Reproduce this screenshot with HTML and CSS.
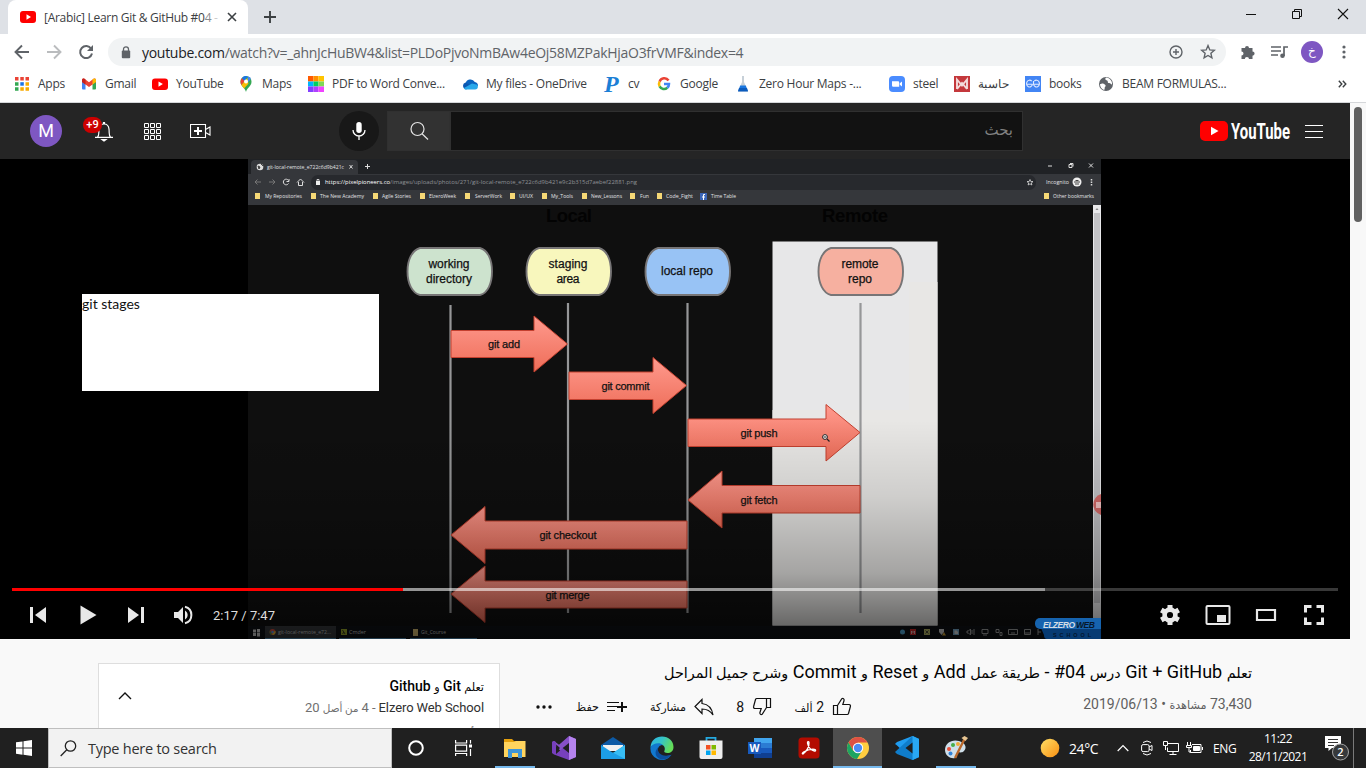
FILE: index.html
```html
<!DOCTYPE html>
<html lang="en">
<head>
<meta charset="utf-8">
<title>[Arabic] Learn Git &amp; GitHub #04</title>
<link rel="stylesheet" href="styles.css">
</head>
<body>
<div class="screen">
  <div class="tabstrip">
    <div class="tab">
      <svg class="tab-logo" width="16" height="16"><rect y="2" width="16" height="12" rx="3" fill="#f00"/><path d="M6.5 5.2v5.6L11 8z" fill="#fff"/></svg>
      <span class="tab-title">[Arabic] Learn Git &amp; GitHub #0<em>4</em> <i>-</i></span>
      <svg width="10" height="10" class="tab-x"><path d="M1 1l8 8M9 1L1 9" stroke="#3c4043" stroke-width="1.6"/></svg>
    </div>
    <svg class="newtab" width="12" height="12"><path d="M6 0v12M0 6h12" stroke="#3c4043" stroke-width="1.9"/></svg>
    <div class="winbtns">
      <svg width="12" height="12"><path d="M1 6.5h10" stroke="#111"/></svg>
      <svg width="12" height="12"><path d="M1.5 3.5h7v7h-7zM3.5 3.500v-2h7v7h-2" fill="none" stroke="#111"/></svg>
      <svg width="12" height="12"><path d="M1 1l10 10M11 1L1 11" stroke="#111" stroke-width="1.1"/></svg>
    </div>
  </div>

  <div class="toolbar">
    <div class="nav">
      <svg width="16" height="16"><path d="M15 8H2M8 1.500L1.500 8 8 14.500" fill="none" stroke="#5f6368" stroke-width="1.9"/></svg>
      <svg width="16" height="16"><path d="M1 8h13M8 1.500L14.500 8 8 14.500" fill="none" stroke="#babcbe" stroke-width="1.9"/></svg>
      <svg width="16" height="16"><path d="M13.200 4.800A6 6 0 1 0 14 9.500" fill="none" stroke="#5f6368" stroke-width="2"/><path d="M15 1v6H9z" fill="#5f6368"/></svg>
    </div>
    <div class="omnibox">
      <svg width="10" height="13"><rect x="0.800" y="4.600" width="8.400" height="7.600" rx="1" fill="#5f6368"/><path d="M2.500 5V3.300a2.500 2.500 0 0 1 5 0V5" fill="none" stroke="#5f6368" stroke-width="1.300"/></svg>
      <span class="url"><b>youtube.com</b>/watch?v=_ahnJcHuBW4&amp;list=PLDoPjvoNmBAw4eOj58MZPakHjaO3frVMF&amp;index=4</span>
      <svg class="zoomi" width="14" height="14"><circle cx="7" cy="7" r="6" fill="none" stroke="#5f6368" stroke-width="1.400"/><path d="M7 4v6M4 7h6" stroke="#5f6368" stroke-width="1.400"/></svg>
      <svg width="16" height="16"><path d="M8 1.600l1.800 4.300 4.600.4-3.500 3 1 4.600L8 11.500l-3.900 2.400 1-4.600-3.500-3 4.600-.4z" fill="none" stroke="#5f6368" stroke-width="1.400"/></svg>
    </div>
    <svg class="ext" width="16" height="16"><path d="M1.500 4H5a2 2 0 1 1 4 0h3.500v3.500a2 2 0 1 1 0 4.200V15H9a2.100 2.100 0 0 0-4.200 0H1.500v-3.500a2 2 0 0 0 0-4z" fill="#5f6368"/></svg>
    <svg class="media" width="17" height="14"><path d="M0 2h10M0 6h10M0 10h7" stroke="#5f6368" stroke-width="1.700"/><path d="M13 11V2h4" stroke="#5f6368" stroke-width="1.700" fill="none"/><circle cx="11.500" cy="10.800" r="2.300" fill="#5f6368"/></svg>
    <div class="profile">خ</div>
    <svg class="kebab" width="4" height="14"><circle cx="2" cy="2" r="1.600" fill="#5f6368"/><circle cx="2" cy="7" r="1.600" fill="#5f6368"/><circle cx="2" cy="12" r="1.600" fill="#5f6368"/></svg>
  </div>

  <div class="bookmarks">
    <div class="bm b1"><svg width="16" height="16"><path d="M1 1h3.500v3.500H1zM6.300 1h3.500v3.500H6.300zM11.500 1H15v3.500h-3.500z" fill="#ea4335"/><path d="M1 6.200h3.500v3.500H1zM1 11.300h3.500v3.500H1z" fill="#34a853"/><path d="M6.300 6.200h3.500v3.500H6.300z" fill="#1a73e8"/><path d="M11.500 6.200H15v3.500h-3.500zM6.300 11.300h3.500v3.500H6.300zM11.500 11.300H15v3.500h-3.500z" fill="#f9ab00"/></svg><span>Apps</span></div>
    <div class="bm b2"><svg width="16" height="16"><path d="M1 3.500l3.500 2.800V13.500H2a1 1 0 0 1-1-1z" fill="#4285f4"/><path d="M15 3.500l-3.500 2.800v7.200H14a1 1 0 0 0 1-1z" fill="#34a853"/><path d="M1 6V4c0-1.500 1.500-2 2.500-1.200L8 6.300l4.500-3.500C13.500 2 15 2.500 15 4v2L8 11z" fill="#ea4335"/><path d="M11.500 3.600l1-.8C13.500 2 15 2.500 15 4v2l-3.500 2.600z" fill="#fbbc04"/><path d="M1 4c0-1.500 1.500-2 2.500-1.200l1 .8v5L1 6z" fill="#c5221f"/></svg><span>Gmail</span></div>
    <div class="bm b3"><svg width="16" height="16"><rect y="2.500" width="16" height="11.500" rx="3" fill="#f00"/><path d="M6.500 5.500v5.200l4.400-2.600z" fill="#fff"/></svg><span>YouTube</span></div>
    <div class="bm b4"><svg width="16" height="16"><path d="M8 16c-.5-4-5.500-5.500-5.500-10.300A5.500 5.500 0 0 1 8 0a5.500 5.500 0 0 1 5.500 5.700C13.500 10.500 8.500 12 8 16z" fill="#34a853"/><path d="M2.500 5.700A5.500 5.500 0 0 1 4 1.900l3 3-3.600 4c-.6-1-.9-2-.9-3.200z" fill="#ea4335"/><path d="M4 1.900A5.500 5.500 0 0 1 9.800.3L6.200 5z" fill="#1a73e8"/><path d="M9.800.3a5.500 5.500 0 0 1 3.100 2.800L8.500 8z" fill="#4285f4"/><path d="M3.400 8.900l6-6.900 1 5.800L6 12.500z" fill="#fbbc04"/><circle cx="8" cy="5.600" r="2" fill="#fff"/></svg><span>Maps</span></div>
    <div class="bm b5"><svg width="16" height="16"><path d="M0 0h5.500v5.500H0z" fill="#ff5a00"/><path d="M5.500 0h5v5.500h-5z" fill="#ff9000"/><path d="M10.500 0H16v5.500h-5.500z" fill="#ffc400"/><path d="M0 5.500h5.500v5H0z" fill="#00b4ff"/><path d="M5.500 5.500h5v5h-5z" fill="#00d060"/><path d="M10.500 5.500H16v5h-5.500z" fill="#7ed957"/><path d="M0 10.500h5.500V16H0z" fill="#8440ff"/><path d="M5.500 10.500h5V16h-5z" fill="#b040ff"/><path d="M10.500 10.500H16V16h-5.500z" fill="#f042ff"/></svg><span>PDF to Word Conve...</span></div>
    <div class="bm b6"><svg width="16" height="16"><path d="M3.500 8a5 5 0 0 1 9.300-2A4 4 0 0 1 16 10l-8 2z" fill="#0a63bf"/><path d="M3.800 13.500A3.700 3.700 0 0 1 3.500 6.400L11 11z" fill="#0b57b0"/><path d="M2 12l8-4.500 5.300 1.300c1.300 2 .3 4.700-2.300 4.700H4c-1 0-1.700-.5-2-1.500z" fill="#28a8ea"/></svg><span>My files - OneDrive</span></div>
    <div class="bm b7"><span class="pglyph">P</span><span>cv</span></div>
    <div class="bm b8"><svg width="16" height="16" fill="none" stroke-width="2.500"><path d="M12.500 4.500A5 5 0 0 0 3.600 5.600" stroke="#ea4335"/><path d="M3.600 5.600a5 5 0 0 0 0 4.800" stroke="#fbbc04"/><path d="M3.600 10.400a5 5 0 0 0 7.700 1.400" stroke="#34a853"/><path d="M11.300 11.800A5 5 0 0 0 13 8H8" stroke="#4285f4"/></svg><span>Google</span></div>
    <div class="bm b9"><svg width="16" height="16"><path d="M7 0h2v6l4 9.500H3L7 6z" fill="#c7d0d8"/><path d="M5.200 9.500h5.600l2 5.500H3.200z" fill="#1976e0"/><path d="M4 12h8l1 3.500H3z" fill="#0b5bbd"/></svg><span>Zero Hour Maps -...</span></div>
    <div class="bm b10"><svg width="16" height="16"><rect width="16" height="16" rx="4" fill="#4a8cff"/><path d="M3 5.300h6a1.200 1.200 0 0 1 1.200 1.200v4.200H4.200A1.200 1.200 0 0 1 3 9.500zM10.800 7.200L13 5.500v5l-2.200-1.700z" fill="#fff"/></svg><span>steel</span></div>
    <div class="bm b11"><svg width="16" height="16"><rect width="16" height="16" fill="#c4383c"/><path d="M3 13V3.500l5 6 5-6V13M3 13l5-6 5 6" fill="none" stroke="#f3dcdc" stroke-width="1.900"/></svg><span lang="ar">حاسبة</span></div>
    <div class="bm b12"><svg width="16" height="16"><rect width="16" height="16" fill="#4285f4"/><path d="M7.500 8.200H2.200M6.700 5.200a3 3.400 0 1 0 .8 3M8.500 8.200h5.300M9.300 5.200a3 3.400 0 1 1-.8 3V5" fill="none" stroke="#dfe9ff" stroke-width="1.100"/></svg><span>books</span></div>
    <div class="bm b13"><svg width="16" height="16"><circle cx="8" cy="8" r="7" fill="#5f6368"/><path d="M2 8c2 0 2-1 4 0s2 2 1 3 .5 2-1 3C3.500 13 2 11 2 8zM8 1.500C6.500 3 7.500 4 9 4.500S9 7 11 7s1.500 1.500 3 1.500C14.500 5 12 2 8 1.500z" fill="#fff"/></svg><span>BEAM FORMULAS...</span></div>
    <svg class="more" width="9" height="8"><path d="M.8.800L3.800 4 .8 7.200M4.800.800L7.800 4 4.800 7.200" fill="none" stroke="#3c4043" stroke-width="1.400"/></svg>
  </div>

  <div class="page">
    <div class="content">
      <div class="yt-head">
        <div class="avatar">M</div>
        <div class="bell">
          <svg width="20" height="22" fill="none" stroke="#fff" stroke-width="1.200"><path d="M1 17.400h18M3.500 17c2-1.500 1-4 1.500-8 .4-3.500 2.500-5 5-5s4.600 1.500 5 5c.5 4-.5 6.500 1.500 8M9.500 4V2.500h1V4"/><path d="M8 19.500h4l-2 1.500z" fill="#fff"/></svg>
          <span class="badge">+9</span>
        </div>
        <svg class="apps" width="17" height="17" fill="none" stroke="#fff" stroke-width="1"><path d="M.5.500h4v4h-4zM6.500.500h4v4h-4zM12.500.500h4v4h-4zM.5 6.500h4v4h-4zM6.500 6.500h4v4h-4zM12.500 6.500h4v4h-4zM.5 12.500h4v4h-4zM6.500 12.500h4v4h-4zM12.500 12.500h4v4h-4z"/></svg>
        <svg class="create" width="21" height="16" fill="none" stroke="#fff"><path d="M.5 1.500h15v13H.5zM15.500 6.500l4.500-2.500v8l-4.500-2.500" stroke-width="1.100"/><path d="M8 4v8M4 8h8" stroke-width="2"/></svg>
        <div class="mic"><svg width="14" height="20"><rect x="4.300" y="1" width="5.400" height="11" rx="2.700" fill="#fff"/><path d="M1 9a6 6 0 0 0 12 0M7 15v4" fill="none" stroke="#fff" stroke-width="1.300"/></svg></div>
        <div class="sbtn"><svg width="20" height="20" fill="none" stroke="#e4e4e4" stroke-width="1.200"><circle cx="8.500" cy="8" r="6.500"/><path d="M13 12.700l6 5.800"/></svg></div>
        <div class="sinput" dir="rtl" lang="ar">بحث</div>
        <svg class="logo" width="96" height="28"><rect x="0" y="4" width="28" height="20" rx="5" fill="#f00"/><path d="M11 9.700v8.600l7.500-4.300z" fill="#fff"/><text x="31" y="22" textLength="59" lengthAdjust="spacingAndGlyphs" font-family="Roboto, sans-serif" font-weight="700" font-size="22" fill="#fff">YouTube</text></svg>
        <svg class="burger" width="18" height="13"><path d="M0 .5h18M0 6.500h18M0 12.500h18" stroke="#fff"/></svg>
      </div>

      <div class="player">
        <svg class="video" width="853" height="480" viewBox="248 159 853 480" font-family="Liberation Sans, sans-serif">
          <defs>
            <linearGradient id="arrow" x1="0" y1="0" x2="0" y2="1"><stop offset="0" stop-color="#ff9a8e"/><stop offset="1" stop-color="#ee6d58"/></linearGradient>
            <linearGradient id="shade" x1="0" y1="0" x2="0" y2="1"><stop offset="0" stop-color="#000" stop-opacity="0"/><stop offset=".35" stop-color="#000" stop-opacity=".11"/><stop offset=".7" stop-color="#000" stop-opacity=".29"/><stop offset="1" stop-color="#000" stop-opacity=".62"/></linearGradient>
          </defs>
          <path d="M248 159h853v480H248z" fill="#0f0f0f"/>
          <path d="M248 159h853v17H248z" fill="#202225"/>
          <path d="M251 176v-12q0-4 4-4h99q4 0 4 4v12z" fill="#35373b"/>
          <path d="M248 174h853v31H248z" fill="#35373b"/>
          <rect x="311" y="175" width="725" height="15" rx="7" fill="#27292d"/>
          <circle cx="260" cy="167" r="3.300" fill="#ddd"/><path d="M258 166l2 1-1 2zM261 164l2 2" stroke="#444"/>
          <g fill="#e2e3e5" font-size="5.900" font-family="Open Sans, sans-serif">
            <text x="267" y="169" textLength="77" lengthAdjust="spacingAndGlyphs">git-local-remote_e722c6d9b421c</text>
            <text x="325" y="184.300" textLength="65" lengthAdjust="spacingAndGlyphs" fill="#fff">https://pixelpioneers.co</text>
            <text x="390" y="184.300" textLength="247" lengthAdjust="spacingAndGlyphs" fill="#8f9296">/images/uploads/photos/271/git-local-remote_e722c6d9b421e9c2b315d7aebef22881.png</text>
            <text x="265" y="198.300" textLength="37" lengthAdjust="spacingAndGlyphs">My Repositories</text>
            <text x="320" y="198.300" textLength="44" lengthAdjust="spacingAndGlyphs">The New Academy</text>
            <text x="382" y="198.300" textLength="29" lengthAdjust="spacingAndGlyphs">Agile Stories</text>
            <text x="429" y="198.300" textLength="27" lengthAdjust="spacingAndGlyphs">ElzeroWeek</text>
            <text x="475" y="198.300" textLength="27" lengthAdjust="spacingAndGlyphs">ServerWork</text>
            <text x="519" y="198.300" textLength="14" lengthAdjust="spacingAndGlyphs">UI/UX</text>
            <text x="551" y="198.300" textLength="22" lengthAdjust="spacingAndGlyphs">My_Tools</text>
            <text x="591" y="198.300" textLength="31" lengthAdjust="spacingAndGlyphs">New_Lessons</text>
            <text x="640" y="198.300" textLength="9" lengthAdjust="spacingAndGlyphs">Fun</text>
            <text x="666" y="198.300" textLength="27" lengthAdjust="spacingAndGlyphs">Code_Fight</text>
            <text x="711" y="198.300" textLength="25" lengthAdjust="spacingAndGlyphs">Time Table</text>
            <text x="1046" y="184.300" textLength="23" lengthAdjust="spacingAndGlyphs">Incognito</text>
            <text x="1053" y="198.300" textLength="41" lengthAdjust="spacingAndGlyphs">Other bookmarks</text>
          </g>
          <path d="M255 193h5v6h-5zM311 193h5v6h-5zM373 193h5v6h-5zM420 193h5v6h-5zM465 193h5v6h-5zM510 193h5v6h-5zM542 193h5v6h-5zM582 193h5v6h-5zM630 193h5v6h-5zM657 193h5v6h-5zM1044 193h5v6h-5z" fill="#f5d876"/>
          <rect x="700" y="193" width="7" height="7" fill="#3b66b8"/><path d="M705 194.500h-1.500V200M702 197h3" stroke="#fff" fill="none"/>
          <g fill="none" stroke="#ddd">
            <path d="M261 182h-6m2.500-2.500L255 182l2.500 2.500M269 182h6m-2.500-2.500L275 182l-2.500 2.500" stroke="#777"/>
            <path d="M288.500 180.500a2.800 2.800 0 1 0 0 3M289 179v2.500h-2.500M297 182.500l3.500-3.500 3.500 3.500M298.500 182v3.500h4V182"/>
            <path d="M349.500 165l3 3.500m0-3.500l-3 3.500M365 166.500h5M367.500 164v5M1048 166h4M1069 164.500h3v3h-3zM1070 163.500h3v3M1089 163.500l4 4m0-4l-4 4"/>
            <path d="M1030 179.500l.8 2 2.200.1-1.700 1.300.6 2.100-1.900-1.200-1.900 1.200.6-2.100-1.700-1.300 2.200-.1z" stroke-width=".8"/>
          </g>
          <rect x="316" y="181" width="4" height="4" fill="#eee"/><path d="M317 181v-1.500h2v1.500" stroke="#eee" fill="none" stroke-width=".8"/>
          <circle cx="1077" cy="182" r="4.500" fill="#eee"/><path d="M1074 182h6M1075.500 180.500h3M1075 184h4" stroke="#444"/>
          <path d="M1091.500 179v1.500m0 1v1.500m0 1v1.500" stroke="#ddd" stroke-width="1.500"/>
          <g font-weight="bold" font-size="18.500" fill="#030303"><text x="546" y="222" textLength="46">Local</text><text x="822" y="222" textLength="66">Remote</text></g>
          <path d="M772.500 241.500h165v384h-165z" fill="#e7e7e8"/>
          <path d="M909 282h28.500v343.500h-165V410H909z" fill="#e8e7e5"/>
          <g stroke="#969798" stroke-width="2.200"><path d="M450.500 305v308M568 303v310M687.500 303v310M860.500 303v310"/></g>
          <g stroke="#777576" stroke-width="1.900">
            <path d="M420 248h60c8 2 12 12 12 23.500S488 293 480 295h-60c-8-2-12.500-12-12.500-23.500S412 250 420 248z" fill="#cde3ce"/>
            <path d="M539 248h60c8 2 12 12 12 23.500S607 293 599 295h-60c-8-2-12.500-12-12.500-23.500S531 250 539 248z" fill="#f8f7bd"/>
            <path d="M658 248h60c8 2 12 12 12 23.500S726 293 718 295h-60c-8-2-12.500-12-12.500-23.500S650 250 658 248z" fill="#98c3f5"/>
            <path d="M831 248h60c8 2 12 12 12 23.500S899 293 891 295h-60c-8-2-12.500-12-12.500-23.500S823 250 831 248z" fill="#f6b0a0"/>
          </g>
          <g fill="url(#arrow)" stroke="#c3402f" stroke-width="1">
            <path d="M451 330.500h83V316l33.500 28-33.500 28v-14.500h-83z"/>
            <path d="M569 372h84v-14.500l33.500 28L653 413.500V399.500h-84z"/>
            <path d="M688 419h138v-14.500l34 28-34 28.500v-14.500H688z"/>
            <path d="M860 485.500H722V471l-34 29 34 28v-15h138z"/>
            <path d="M687 521H485v-14.500L451 535l34 28.500V549h202z"/>
            <path d="M687 581H485v-15L451 594l34 28.500V608h202z"/>
          </g>
          <g fill="#111" stroke="#111" stroke-width=".25" font-size="12" text-anchor="middle">
            <text x="449" y="268" textLength="41">working</text><text x="449" y="282.500" textLength="46">directory</text>
            <text x="568" y="268" textLength="39">staging</text><text x="568" y="282.500" textLength="23">area</text>
            <text x="687" y="275" textLength="52">local repo</text>
            <text x="860" y="268" textLength="37">remote</text><text x="860" y="282.500" textLength="24">repo</text>
            <g font-size="11"><text x="504" y="348" textLength="32">git add</text><text x="625.500" y="389.500" textLength="48">git commit</text><text x="759" y="437" textLength="37">git push</text><text x="759" y="503.500" textLength="37">git fetch</text><text x="568" y="539" textLength="57">git checkout</text><text x="567.500" y="598.500" textLength="44">git merge</text></g>
          </g>
          <circle cx="825" cy="437" r="2.400" fill="#fff" stroke="#222"/><path d="M823.700 437h2.600M827 439l2.500 2.500" stroke="#222" stroke-width="1.200"/>
          <path d="M1093 205h8v434h-8z" fill="#e8e8ea"/><path d="M1094 213h6v390h-6z" fill="#c3c3c6"/><path d="M1095.500 210l1.500-2 1.500 2z" fill="#888"/>
          <path d="M1101 494a11 11 0 0 0 0 21z" fill="#d46a68"/><path d="M1096 502h5v6h-5z" fill="#f4c3c3"/>
          <path d="M248 626h853v13H248z" fill="#101317"/><path d="M265 626h71v13h-71z" fill="#393c40"/>
          <path d="M265 638.500h71M339 638.500h67M410 638.500h67" stroke="#5b9cc8"/>
          <g fill="#d5d5d5" font-size="5.900" font-family="Open Sans, sans-serif"><text x="278" y="634.300" textLength="53" lengthAdjust="spacingAndGlyphs">git-local-remote_e72...</text><text x="349" y="634.300" textLength="17" lengthAdjust="spacingAndGlyphs">Cmder</text><text x="421" y="634.300" textLength="25" lengthAdjust="spacingAndGlyphs">Git_Course</text></g>
          <path d="M253 629.500h3v3h-3zM257 629h3v3.500h-3zM253 633h3v3h-3zM257 633h3v3.500h-3z" fill="#ddd"/>
          <circle cx="272.500" cy="632" r="3" fill="#e0503c"/><path d="M272.500 632l3-1a3 3 0 0 1-3 4z" fill="#f3c63c"/><path d="M270 630.500l2 4.500a3 3 0 0 1-2-4.500z" fill="#39a852"/><circle cx="272.500" cy="632" r="1.200" fill="#5c9dff"/>
          <path d="M341 629h6v6h-6z" fill="#a5b52c"/><path d="M342.500 630l2.500 4M344 632l-1.500 2" stroke="#222" stroke-width=".8"/><path d="M413 629h5v7h-5z" fill="#e8cc7c"/>
          <circle cx="902.500" cy="632" r="2.500" fill="#58b7ea"/><path d="M910 629h6v6h-6z" fill="#e02d2d"/><path d="M911.500 634v-3l1.500 1.500 1.500-1.500v3" stroke="#fff" fill="none" stroke-width=".7"/><path d="M924 629h6v6h-6z" fill="#c7c66f"/><path d="M925.500 630.500l3 3m0-3l-3 3" stroke="#333" stroke-width=".8"/><path d="M939 629h5v3l-2.500 3-2.500-3z" fill="#ddd"/><path d="M942 635.500l2-3.500 2 3.500z" fill="#e8b63c"/><path d="M953 629h6v6h-6z" fill="#7fb5d8"/><path d="M954.500 630.500h2l1.500 1.500v2h-3.500z" fill="#eee"/>
          <g stroke="#bbb" fill="none" stroke-width=".9"><path d="M967 631h1.500l2-2v6l-2-2H967zM972 630v4M974 629v6M982 629.500h6v4h-6zM983 635h4M996 629.500h3v3h-3zM1000 632.500h2v3h-2zM1008.500 629.500h9v5h-9zM1011 633h4M1024.500 629.500h6v5h-6zM1025 633h5M1038 629v6M1038 632h3"/></g>
          <path d="M248 420h853v219H248z" fill="url(#shade)"/>
          <path d="M1041 628h60v11h-54q-3 0-3-4z" fill="#073b73"/><rect x="1035" y="618" width="70" height="11" rx="5" fill="#1663ae"/>
          <text x="1043" y="627.500" font-size="8.500" font-weight="bold" font-style="italic" fill="#d5dde5" textLength="32">ELZERO</text><text x="1076" y="627.500" font-size="8.500" font-weight="bold" font-style="italic" fill="#07182b" textLength="19">WEB</text><text x="1053" y="637" font-size="5.500" font-weight="bold" fill="#03162e" textLength="38">SCHOOL</text>
        </svg>
        <div class="note">git stages</div>
        <div class="chrome-controls">
          <div class="progress"><div class="loaded"></div><div class="played"></div></div>
          <div class="controls">
            <svg class="c-first" width="52" height="48"><path d="M18 16h3v16h-3zM34 16v16l-11-8z" fill="#e8e8e8"/></svg>
            <svg width="48" height="48"><path d="M16.500 14.500v19L32.500 24z" fill="#e8e8e8"/></svg>
            <svg width="48" height="48"><path d="M16 16l11 8-11 8zM29 16h3v16h-3z" fill="#e8e8e8"/></svg>
            <svg width="48" height="48"><path d="M14 21v6h4l5 5V16l-5 5z" fill="#e8e8e8"/><path d="M25 19.500c3.500 2 3.500 7 0 9z" fill="#e8e8e8"/><path d="M25 15.700c8.500 2 8.500 14.600 0 16.600" fill="none" stroke="#e8e8e8" stroke-width="2"/></svg>
            <span class="time">2:17 / 7:47</span>
            <span class="grow"></span>
            <svg width="48" height="48"><circle cx="24" cy="24" r="5.400" fill="none" stroke="#e8e8e8" stroke-width="4.600"/><path d="M24 14v4M24 30v4M15.300 19l3.500 2M29.200 27l3.500 2M15.300 29l3.500-2M29.200 21l3.500-2" stroke="#e8e8e8" stroke-width="5"/></svg>
            <svg width="48" height="48"><rect x="12.500" y="15" width="23" height="18" rx="1" fill="none" stroke="#e8e8e8" stroke-width="2"/><path d="M23 24h9v7h-9z" fill="#e8e8e8"/></svg>
            <svg width="48" height="48"><path d="M15 19h18v10H15z" fill="none" stroke="#e8e8e8" stroke-width="2.200"/></svg>
            <svg width="48" height="48"><path d="M15.500 21.500v-6h6M26.500 15.500h6v6M32.500 26.500v6h-6M21.500 32.500h-6v-6" fill="none" stroke="#e8e8e8" stroke-width="3"/></svg>
          </div>
        </div>
      </div>

      <div class="below">
        <div class="playlist">
          <svg width="14" height="8"><path d="M1 7l6-6 6 6" fill="none" stroke="#111" stroke-width="1.400"/></svg>
          <div class="pl-text" dir="rtl" lang="ar">
            <div class="pl-title"><span class="ar">تعلم</span> Git <span class="ar">و</span> Github</div>
            <div class="pl-sub"><bdi>Elzero Web School</bdi> - 4 <span class="ar">من أصل</span> 20</div>
            <div class="pl-next"><span class="ar">أساسيات</span></div>
          </div>
        </div>
        <div class="info" dir="rtl" lang="ar">
          <h1><span class="ar">تعلم</span> Git + GitHub <span class="ar">درس</span> <bdi dir="ltr">#04</bdi> - <span class="ar">طريقة عمل</span> Add <span class="ar">و</span> Reset <span class="ar">و</span> Commit <span class="ar">وشرح جميل المراحل</span></h1>
          <div class="meta">
            <div class="views">73,430 <span class="ar">مشاهدة</span> • <bdi dir="ltr">2019/06/13</bdi></div>
            <div class="actions">
              <div class="act a1"><svg width="20" height="20" fill="none" stroke="#111" stroke-width="1.200"><path d="M1.500 8.500h4v9h-4zM5.500 8.500L9.800 1.700c1.500-.8 2.700.5 2.200 2L10.800 7.500h6.200c1.200 0 1.700 1 1.400 2l-1.900 7c-.2.600-.7 1-1.300 1H5.500"/></svg><span>2 <span class="ar">ألف</span></span></div>
              <div class="act a2"><svg width="20" height="20" fill="none" stroke="#111" stroke-width="1.200"><path d="M14.500 1.500h4v9h-4zM14.500 10.500l-4.300 6.800c-1.500.8-2.700-.5-2.200-2l1.200-3.800H3c-1.200 0-1.700-1-1.400-2l1.900-7c.2-.6.7-1 1.300-1h9.700"/></svg><span>8</span></div>
              <div class="act a3"><svg width="20" height="18" fill="none" stroke="#111" stroke-width="1.200"><path d="M8 1.500L1 8.500l7 7v-4.500c5 0 8.500 2 11 6-1-7-4.500-10.700-11-11.500z"/></svg><span class="ar">مشاركة</span></div>
              <div class="act a4"><svg width="21" height="14" stroke="#111" fill="none"><path d="M0 2.500h12M0 6.500h12M0 10.500h8" stroke-width="1.200"/><path d="M15 2v10M10 7h10" stroke-width="2"/></svg><span class="ar">حفظ</span></div>
              <svg width="16" height="4" fill="#111"><circle cx="2" cy="2" r="1.700"/><circle cx="8" cy="2" r="1.700"/><circle cx="14" cy="2" r="1.700"/></svg>
            </div>
          </div>
        </div>
      </div>
    </div>
    <div class="scrollbar"><div class="thumb"></div></div>
  </div>

  <div class="taskbar">
    <div class="start"><svg width="16" height="16" fill="#fff"><path d="M0 2.300L6.500 1.400v6.200H0zM7.500 1.200L16 0v7.600H7.500zM0 8.500h6.500v6.200L0 13.800zM7.500 8.500H16V16l-8.500-1.200z"/></svg></div>
    <div class="search"><svg width="17" height="17" fill="none" stroke="#222" stroke-width="1.300"><circle cx="10.500" cy="6" r="5.200"/><path d="M6.800 9.800L.7 16"/></svg><span>Type here to search</span></div>
    <div class="task t48"><svg width="18" height="18"><circle cx="9" cy="9" r="6.800" fill="none" stroke="#fff" stroke-width="2"/></svg></div>
    <div class="task t48 tv"><svg width="17" height="16" fill="none" stroke="#fff" stroke-width="1.200"><path d="M.6 0v3h11V0M.6 5.100h11v6H.6zM.6 16v-2.500h11V16M15.500 0v3.500M15.500 9v7"/><path d="M14 4.500h3v3h-3z" fill="#fff" stroke="none"/></svg></div>
    <div class="task run"><svg width="24" height="24"><path d="M1 3h8l2 2h11v4H1z" fill="#e5a00d"/><path d="M1 6h10l2-1h9.500v16H1z" fill="#ffd45e"/><path d="M5 13h14v9h-4v-5H9v5H5z" fill="#3e95d8"/></svg></div>
    <div class="task"><svg width="24" height="24"><path d="M17 0l7 3v18l-7 3L2 8l-2 1V6l2-1 5 3.800z" fill="#8750c8"/><path d="M17 0v24L2 18.500 0 17V6l2-1 2 1v12l13-11z" fill="#7740bd"/><path d="M17 0l7 3v18l-7 3z" fill="#b583ee"/><path d="M4.200 8.500v7L8 12zM17 7v10l-6.300-5z" fill="#1f1f1f"/></svg></div>
    <div class="task"><svg width="24" height="24"><path d="M0 9L12 1l12 8v2H0z" fill="#0d5aa5"/><path d="M2 9h20v6H2z" fill="#f1f1f1"/><path d="M0 9l12 8 12-8v14H0z" fill="#1c9ee7"/><path d="M24 9v14L9 15l3 2z" fill="#38bdf4"/></svg></div>
    <div class="task"><svg width="24" height="24"><defs><linearGradient id="edge" x1="0" y1="0" x2="1" y2=".4"><stop offset="0" stop-color="#2cb4e6"/><stop offset=".5" stop-color="#35c4c8"/><stop offset="1" stop-color="#64dd58"/></linearGradient></defs><path d="M.5 11C1 4.500 6 .5 12 .5 18.500.5 23.500 5 23.500 11c0 4-2.800 6-6 6-2.500 0-4-1-3-2.500 1-2 0-6-4.500-6-4 0-8 1-9.500 2.500z" fill="url(#edge)"/><path d="M.5 11C3 7 10 6 13 9c-4 0-5.500 3-5 6 .7 4.500 6 7 13.500 3.800A11.500 11.500 0 0 1 .5 11z" fill="#1279cf"/><path d="M8 13c-.5 5 5 8.500 13.500 5.800A11.500 11.500 0 0 1 11 23.500C4 21 4 14 9.500 10.500 8.500 11 8 12 8 13z" fill="#0c4f9e"/></svg></div>
    <div class="task"><svg width="24" height="24"><path d="M7.500 5V1.800h9V5" fill="none" stroke="#25a9e0" stroke-width="1.800"/><path d="M.5 4.500h23V21a2 2 0 0 1-2 2h-19a2 2 0 0 1-2-2z" fill="#eee"/><path d="M7 9h4.500v4.500H7z" fill="#f25022"/><path d="M12.500 9H17v4.500h-4.500z" fill="#7fba00"/><path d="M7 14.500h4.500V19H7z" fill="#00a4ef"/><path d="M12.500 14.500H17V19h-4.500z" fill="#ffb900"/></svg></div>
    <div class="task"><svg width="24" height="24"><path d="M6 2h18v5H6z" fill="#41a5ee"/><path d="M6 7h18v5H6z" fill="#2b7cd3"/><path d="M6 12h18v5H6z" fill="#185abd"/><path d="M6 17h18v5H6z" fill="#103f91"/><path d="M0 6h13v12H0z" fill="#185abd"/><text x="1.500" y="15.800" textLength="10" lengthAdjust="spacingAndGlyphs" font-family="Open Sans, sans-serif" font-weight="bold" font-size="11" fill="#fff">W</text></svg></div>
    <div class="task"><svg width="24" height="24"><rect x="1.500" y="1.500" width="21" height="21" rx="3.500" fill="#b30b00"/><path d="M6 18c3-2 6.500-7 6-11.500-.2-1.500-1.800-1-1.500.5.800 4.500 4 7.500 7 8 1.500.2 1.500-1.500 0-1.700-4-.5-8 1-11 2.700-1.500 1-1.500 2-.5 2z" fill="none" stroke="#fff" stroke-width="1.300"/></svg></div>
    <div class="task run active"><svg width="24" height="24"><circle cx="12" cy="12" r="11" fill="#ffcd40"/><path d="M2.500 6.500A11 11 0 0 1 21.500 6.500H12L7.200 14.800z" fill="#dd5144"/><path d="M2.500 6.500A11 11 0 0 0 11 23l5.200-8.500-8.900.5z" fill="#1da462"/><circle cx="12" cy="12" r="5.200" fill="#fff"/><circle cx="12" cy="12" r="4.200" fill="#4c8bf5"/></svg></div>
    <div class="task"><svg width="24" height="24"><path d="M17.500 0L24 3v18l-6.500 3L1.500 9 0 8l2-2z" fill="#1f9cf0"/><path d="M17.500 24L24 21V3l-6.500-3L0 16l2 2z" fill="#0f7dcb"/><path d="M17.500 0L24 3v18l-6.500 3z" fill="#29a8f4"/><path d="M17.500 6.500v11L10.500 12zM0 9.500L3 12l-3 2.500z" fill="#1f1f1f"/></svg></div>
    <div class="task run"><svg width="24" height="24"><path d="M1 14C1 7 8 3 15 5s8 7 5 10-6 0-7 2 2 4-2 5S1 20 1 14z" fill="#cfdfea"/><circle cx="5" cy="13" r="2" fill="#e8503a"/><circle cx="9" cy="9" r="2" fill="#46ae4a"/><circle cx="14" cy="8" r="2" fill="#f2a93a"/><circle cx="6.500" cy="17.500" r="2" fill="#3283d8"/><path d="M20.500 3L11 22" stroke="#b8672a" stroke-width="2.400"/><path d="M17.500 2l3-2 3.500 2-2.500 3z" fill="#e7c592"/></svg></div>
    <div class="tray">
      <svg width="20" height="20"><defs><linearGradient id="sun" x1="0" y1="0" x2="1" y2="1"><stop offset="0" stop-color="#ffe066"/><stop offset="1" stop-color="#f98f12"/></linearGradient></defs><circle cx="10" cy="10" r="9.300" fill="url(#sun)"/></svg>
      <span class="temp">24°C</span>
      <svg class="chev" width="12" height="8"><path d="M.7 7L6 1.500 11.300 7" fill="none" stroke="#fff" stroke-width="1.200"/></svg>
      <svg class="cam" width="12" height="16" fill="none" stroke="#fff"><rect x=".6" y="4.600" width="7.500" height="7" rx="1.500"/><path d="M8 7l3-1.500v5L8 9M2 2.500q4-3 8 0M2 13.500q4 3 8 0"/></svg>
      <svg class="mon" width="16" height="15" fill="none" stroke="#fff"><path d="M5 2.500h10.500v8H4.500v-4M10 10.500v3M6.500 13.500h7M.5.500h4v4h-4zM2.500 5v4"/></svg>
      <svg class="bat" width="17" height="12" fill="none" stroke="#fff"><path d="M6 2.500h9v8H4.500V8M16.500 5v3M1.500 0v3M4.500 0v3M.5 3.500h5v2h-5zM3 6v4h2"/><path d="M7.500 4.500h6v4h-6z" fill="#fff"/></svg>
      <span class="lang">ENG</span>
      <div class="clock"><div>11:22</div><div>28/11/2021</div></div>
      <svg class="notif" width="26" height="28"><path d="M0 2h16v12H7l-3.500 3v-3H0z" fill="#fff"/><path d="M3 5.500h10M3 8.500h10M3 11.500h6" stroke="#333"/><circle cx="15.500" cy="18" r="8" fill="#37393b" stroke="#a5a5a5"/><text x="15.500" y="22" font-family="Open Sans, sans-serif" font-size="11" font-weight="600" fill="#fff" text-anchor="middle">2</text></svg>
      <div class="peek"></div>
    </div>
  </div>
</div>
</body>
</html>
```
FILE: styles.css
```css
* { box-sizing: border-box; }
body { margin: 0; font-family: "Open Sans", "Noto Sans", sans-serif; background: #fff; }
svg { display: block; flex: none; }
.screen { width: 1366px; height: 768px; overflow: hidden; display: flex; flex-direction: column; }

.tabstrip { height: 34px; flex: none; background: #dee1e6; display: flex; padding-left: 8px; }
.tab { width: 240px; height: 34px; background: #fff; border-radius: 8px 8px 0 0; display: flex; align-items: center; padding-left: 12px; }
.tab-title { margin-left: 8px; width: 174px; font-size: 12px; letter-spacing: -0.3px; color: #3c4043; white-space: nowrap; }
.tab-title em { color: #8b8d8f; font-style: normal; }
.tab-title i { color: #ccc; font-style: normal; }
.tab-x { margin-left: 9px; }
.newtab { margin: 11px 0 0 16px; }
.winbtns { margin-left: auto; display: flex; gap: 34px; padding: 8px 17px 0 0; }

.toolbar { height: 36px; flex: none; display: flex; align-items: center; padding-left: 14px; }
.nav { display: flex; gap: 16px; width: 94px; }
.omnibox { width: 1118px; height: 28px; border-radius: 14px; background: #f1f3f4; display: flex; align-items: center; padding-left: 13px; }
.url { margin-left: 11px; width: 1027px; font-size: 14px; letter-spacing: -0.285px; color: #5f6368; white-space: nowrap; }
.url b { font-weight: 400; color: #202124; }
.zoomi { margin-right: 17px; }
.ext { margin-left: 14px; }
.media { margin-left: 15px; }
.profile { margin-left: 13px; width: 22px; height: 22px; border-radius: 50%; background: #7e57c2; color: #fff; font-size: 12px; line-height: 20px; text-align: center; }
.kebab { margin-left: 19px; }

.bookmarks { height: 33px; flex: none; display: flex; align-items: center; padding: 0 0 5px 14px; border-bottom: 1px solid #d5d7da; }
.bm { display: flex; align-items: center; gap: 8px; flex: none; font-size: 12px; letter-spacing: -0.25px; color: #3c4043; white-space: nowrap; }
.pglyph { width: 16px; height: 28px; font: italic bold 24px/28px "Liberation Serif", serif; color: #1b7fd6; }
.b1 { width: 67px; } .b2 { width: 71px; } .b3 { width: 86px; } .b4 { width: 70px; }
.b5 { width: 154px; } .b6 { width: 142px; } .b7 { width: 52px; } .b8 { width: 79px; }
.b9 { width: 154px; } .b10 { width: 65px; } .b11 { width: 71px; } .b12 { width: 73px; } .b13 { width: 240px; }

.page { height: 625px; flex: none; display: flex; }
.content { width: 1350px; display: flex; flex-direction: column; background: #f9f9f9; }
.scrollbar { width: 16px; background: #f8f8f8; padding: 4px; }
.thumb { width: 8px; height: 115px; border-radius: 4px; background: #606060; }

.yt-head { height: 56px; flex: none; background: #252525; display: flex; align-items: center; padding-left: 30px; }
.avatar { width: 32px; height: 32px; border-radius: 50%; background: #7e57c2; color: #fff; font: 18px/32px Roboto, sans-serif; text-align: center; }
.bell { position: relative; margin-left: 32px; }
.badge { position: absolute; left: -11px; top: -3px; width: 19px; height: 16px; border-radius: 8px; background: #c00; color: #fff; font: 500 11px/15px Roboto, sans-serif; text-align: center; }
.apps { margin-left: 30px; }
.create { margin-left: 29px; }
.mic { margin-left: 128px; width: 40px; height: 40px; border-radius: 50%; background: #181818; display: flex; align-items: center; justify-content: center; }
.sbtn { margin-left: 8px; width: 63px; height: 40px; background: #323232; display: flex; align-items: center; justify-content: center; border: 1px solid #303030; }
.sinput { width: 573px; height: 40px; background: #121212; border: 1px solid #303030; padding: 0 9px; color: #808080; font: 15px/36px Roboto, "DejaVu Sans", sans-serif; }
.logo { margin-left: 177px; }
.burger { margin-left: 9px; }

.player { position: relative; height: 480px; flex: none; background: #000; padding-left: 248px; }
.note { position: absolute; left: 82px; top: 135px; width: 297px; height: 97px; background: #fff; color: #111; font: 14px/19px Lato, sans-serif; }
.chrome-controls { position: absolute; left: 12px; right: 12px; bottom: 0; height: 51px; }
.progress { position: relative; height: 3px; background: rgba(255,255,255,.22); }
.loaded, .played { position: absolute; left: 0; top: 0; height: 3px; }
.loaded { width: 1033px; background: rgba(255,255,255,.45); }
.played { width: 391px; background: #f00; }
.controls { display: flex; align-items: center; height: 48px; }
.time { margin-left: 5px; font: 13px Roboto, sans-serif; color: #ddd; }
.grow { flex: 1; }

.ar { font-size: .8em; }
.below { flex: 1; display: flex; justify-content: space-between; align-items: flex-start; padding: 0 98px 0 98px; overflow: hidden; }
.playlist { width: 402px; height: 100px; margin-top: 24px; background: #fff; border: 1px solid #dedede; display: flex; justify-content: space-between; padding: 12px 15px 0 19px; }
.playlist svg { margin-top: 16px; }
.pl-text { font-family: Roboto, "Liberation Sans", "DejaVu Sans", sans-serif; white-space: nowrap; }
.pl-title { font-size: 14px; line-height: 21px; height: 21px; font-weight: 500; color: #030303; }
.pl-sub { font-size: 13px; line-height: 21px; height: 21px; letter-spacing: -0.1px; color: #707070; }
.pl-sub bdi { color: #303030; }
.pl-next { font-size: 14px; line-height: 20px; margin: 4px 10px 0 0; color: #030303; }
.info { width: 720px; font-family: Roboto, "Liberation Sans", "DejaVu Sans", sans-serif; white-space: nowrap; }
.info h1 { margin: 20px 0 0; font-size: 18px; line-height: 25px; height: 25px; font-weight: 400; color: #030303; }
.meta { display: flex; align-items: flex-start; height: 44px; }
.views { width: 400px; font-size: 14px; line-height: 20px; color: #606060; margin-top: 10px; }
.actions { display: flex; align-items: center; height: 46px; flex: none; }
.act { display: flex; align-items: center; gap: 8px; flex: none; font-size: 14px; color: #111; }
.a1 { width: 80px; } .a2 { width: 58px; } .a3 { width: 86px; } .a4 { width: 76px; }

.taskbar { height: 40px; flex: none; background: #202020; display: flex; }
.start { width: 48px; display: flex; align-items: center; justify-content: center; }
.search { width: 344px; background: #f2f2f2; border: 1px solid #bfbfbf; display: flex; align-items: center; padding-left: 11px; gap: 11px; font-size: 14.500px; letter-spacing: -0.25px; color: #333; }
.task { width: 49px; height: 40px; display: flex; align-items: center; justify-content: center; padding-bottom: 0; }
.t48 { width: 48px; }
.tv { margin-right: 2px; padding-right: 2px; }
.run { background: linear-gradient(#76b9ed, #76b9ed) 50% 100% / 40px 2px no-repeat; }
.active { background: linear-gradient(#76b9ed, #76b9ed) 50% 100% / 49px 2px no-repeat, #4e4e4e; }
.tray { flex: 1; display: flex; align-items: center; padding-left: 60px; color: #fff; font-size: 12px; }
.temp { margin-left: 9px; width: 48px; font-size: 14px; letter-spacing: -0.4px; }
.cam { margin-left: 12px; }
.mon { margin-left: 10px; }
.bat { margin-left: 7px; }
.lang { margin-left: 10px; width: 27px; letter-spacing: -0.4px; }
.clock { width: 76px; text-align: center; line-height: 18px; letter-spacing: -0.5px; }
.notif { margin: 0 0 0 9px; }
.peek { margin-left: 2px; width: 1px; height: 40px; background: #7a7a7a; }
```
